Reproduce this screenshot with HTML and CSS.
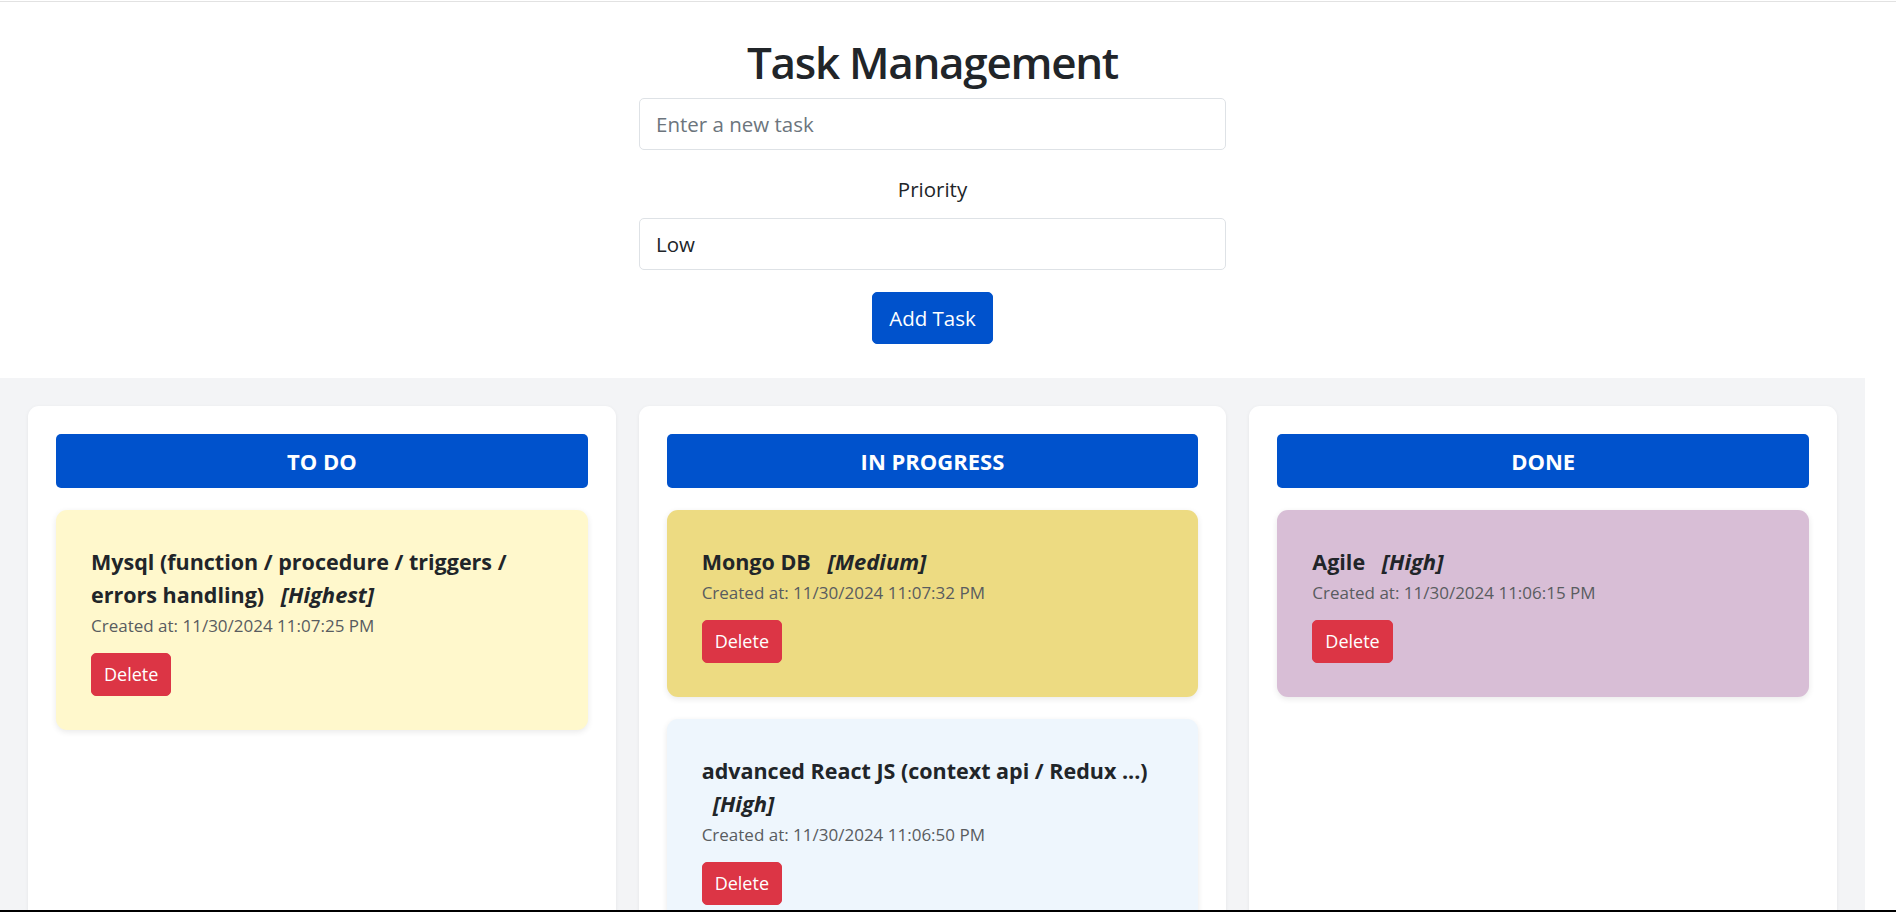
FILE: index.html
```html
<!DOCTYPE html>
<html lang="en">
<head>
<meta charset="utf-8">
<title>Task Management</title>
<link rel="stylesheet" href="styles.css">
</head>
<body>
<div class="topline"></div>
<div class="page">
  <header class="composer">
    <h1 class="title">Task Management</h1>
    <input class="field" type="text" placeholder="Enter a new task">
    <label class="field-label">Priority</label>
    <select class="field field-select">
      <option>Low</option>
      <option>Medium</option>
      <option>High</option>
      <option>Highest</option>
    </select>
    <button class="btn btn-primary">Add Task</button>
  </header>

  <main class="board">
    <section class="column">
      <h2 class="column-title">To Do</h2>
      <article class="task task-lemon">
        <div class="task-title"><strong>Mysql (function / procedure / triggers / errors handling)</strong> <em class="priority">[Highest]</em></div>
        <div class="task-meta">Created at: 11/30/2024 11:07:25 PM</div>
        <button class="btn btn-danger">Delete</button>
      </article>
    </section>

    <section class="column">
      <h2 class="column-title">In Progress</h2>
      <article class="task task-gold">
        <div class="task-title"><strong>Mongo DB</strong> <em class="priority">[Medium]</em></div>
        <div class="task-meta">Created at: 11/30/2024 11:07:32 PM</div>
        <button class="btn btn-danger">Delete</button>
      </article>
      <article class="task task-alice">
        <div class="task-title"><strong>advanced React JS (context api / Redux ...)</strong> <em class="priority">[High]</em></div>
        <div class="task-meta">Created at: 11/30/2024 11:06:50 PM</div>
        <button class="btn btn-danger">Delete</button>
      </article>
    </section>

    <section class="column">
      <h2 class="column-title">Done</h2>
      <article class="task task-thistle">
        <div class="task-title"><strong>Agile</strong> <em class="priority">[High]</em></div>
        <div class="task-meta">Created at: 11/30/2024 11:06:15 PM</div>
        <button class="btn btn-danger">Delete</button>
      </article>
    </section>
  </main>
</div>
<div class="bottomline"></div>
</body>
</html>
```

FILE: styles.css
```css
* {
  box-sizing: border-box;
}

html, body {
  margin: 0;
  padding: 0;
  background: #ffffff;
}

body {
  font-family: "Open Sans", "Noto Sans", sans-serif;
  font-size: 20.5px;
  line-height: 33px;
  color: #212529;
}

.topline {
  height: 1px;
  margin-top: 1px;
  background: #e2e2e2;
}

.page {
  width: 1865px;
}

/* ---------- composer ---------- */
.composer {
  display: flex;
  flex-direction: column;
  align-items: center;
  padding: 27px 0 34px;
}

.title {
  margin: 0 0 3px;
  font-size: 44px;
  line-height: 66px;
  font-weight: 600;
  letter-spacing: -1.3px;
}

.field {
  display: block;
  width: 587px;
  height: 52px;
  padding: 8px 16px;
  font-family: inherit;
  font-size: 20.5px;
  line-height: 33px;
  color: #212529;
  background: #ffffff;
  border: 1px solid #dee2e6;
  border-radius: 5px;
  outline: none;
}

.field::placeholder {
  color: #6c757d;
  opacity: 1;
}

.field-select {
  appearance: none;
  -webkit-appearance: none;
}

.field-label {
  margin: 23px 0 12px;
  line-height: 33px;
}

.btn {
  display: inline-block;
  font-family: inherit;
  border: 1px solid transparent;
  border-radius: 5px;
  cursor: pointer;
  color: #ffffff;
}

.btn-primary {
  margin-top: 22px;
  height: 52px;
  padding: 0 16px;
  font-size: 20.5px;
  line-height: 33px;
  background: #0052cc;
  border-color: #0052cc;
}

.btn-danger {
  height: 43px;
  padding: 0 12px;
  font-size: 18px;
  line-height: 29px;
  background: #dc3545;
  border-color: #dc3545;
}

/* ---------- board ---------- */
.board {
  display: grid;
  grid-template-columns: repeat(3, 1fr);
  gap: 23px;
  padding: 28px;
  background: #f3f4f6;
}

.column {
  background: #ffffff;
  border-radius: 11px;
  padding: 28px;
  box-shadow: 0 1px 4px rgba(0, 0, 0, 0.06);
}

.column-title {
  margin: 0 0 22px;
  height: 54px;
  padding: 10px 0;
  font-size: 22px;
  line-height: 34px;
  font-weight: 700;
  text-transform: uppercase;
  text-align: center;
  color: #ffffff;
  background: #0052cc;
  border-radius: 5px;
}

.task {
  padding: 34px 34px 33px;
  border: 1px solid transparent;
  border-radius: 11px;
  margin-bottom: 22px;
  box-shadow: 0 2px 6px rgba(0, 0, 0, 0.09);
}

.task-lemon { background: #fff8cc; }
.task-gold { background: #eddb82; }
.task-alice { background: #eef6fd; }
.task-thistle { background: #d8bed6; }

.task-title {
  font-size: 21.5px;
  line-height: 33px;
}

.task-title strong {
  font-weight: 700;
}

.priority {
  margin-left: 11px;
  font-size: 22px;
  font-weight: 700;
  font-style: italic;
}

.task-meta {
  margin-bottom: 13px;
  font-size: 17px;
  line-height: 29px;
  color: #595c5f;
}

.bottomline {
  position: fixed;
  left: 0;
  right: 0;
  bottom: 0;
  height: 2px;
  background: #000000;
}
```
